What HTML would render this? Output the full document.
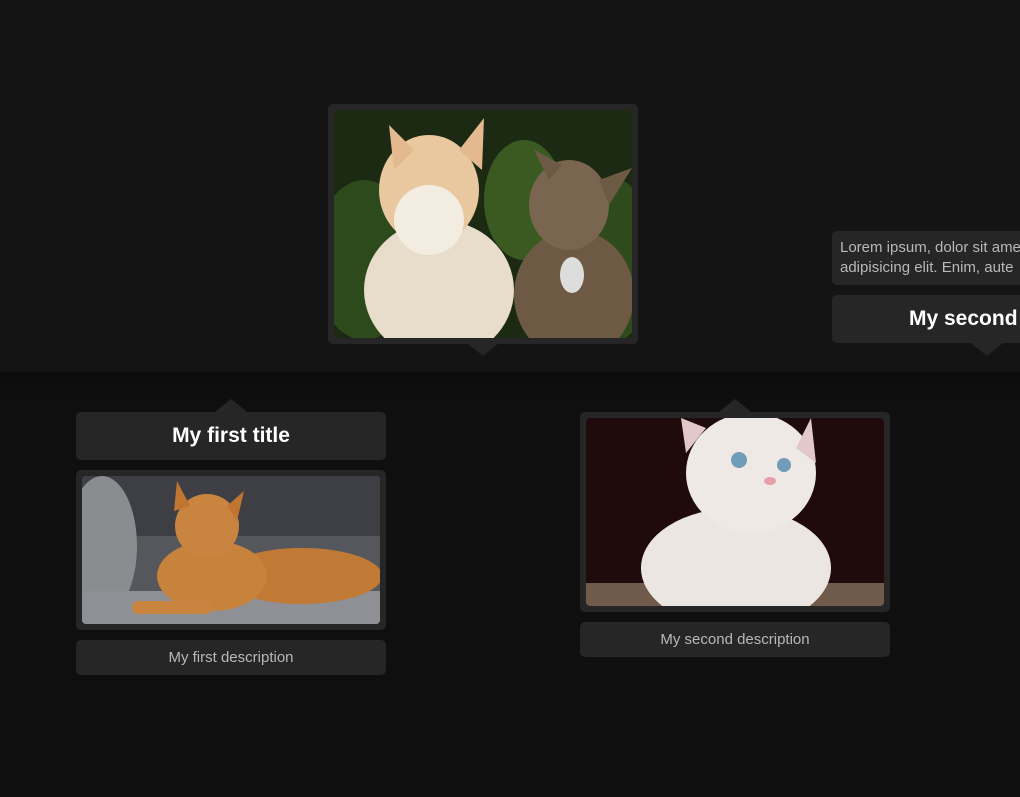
<!DOCTYPE html>
<html><head><meta charset="utf-8"><style>
*{margin:0;padding:0;box-sizing:border-box}
body{width:1020px;height:797px;overflow:hidden;background:#0f0f0f;font-family:"Liberation Sans",sans-serif;position:relative}
.band{position:absolute;left:0;top:0;width:1020px;height:372px;background:#141414}
.shade{position:absolute;left:0;top:372px;width:1020px;height:30px;background:linear-gradient(#0b0b0b,#0f0f0f)}
.box{position:absolute;background:#262626;border-radius:5px}
.img{position:absolute;border-radius:4px;overflow:hidden}
.arr{position:absolute;width:0;height:0;border-left:16px solid transparent;border-right:16px solid transparent}
.up{border-bottom:13px solid #262626}
.dn{border-top:13px solid #262626}
.t{font-weight:bold;color:#fff;font-size:21px;text-align:center;line-height:48px;white-space:nowrap;overflow:hidden}
.d{color:#b8b8b8;font-size:15px;text-align:center;line-height:35px}
</style></head><body>
<div class="band"></div><div class="shade"></div>

<!-- top card -->
<div class="box" style="left:328px;top:104px;width:310px;height:240px"></div>
<div class="arr dn" style="left:467px;top:343px"></div>
<div class="img" style="left:334px;top:110px;width:298px;height:228px">
<svg width="298" height="228"><rect width="298" height="228" fill="#1c2a14"/>
<ellipse cx="30" cy="150" rx="50" ry="80" fill="#2d4a1d"/><ellipse cx="190" cy="90" rx="40" ry="60" fill="#3a5a22"/><ellipse cx="285" cy="150" rx="30" ry="80" fill="#2f4a1c"/>
<ellipse cx="105" cy="180" rx="75" ry="70" fill="#e8dccb"/><ellipse cx="95" cy="80" rx="50" ry="55" fill="#e9c8a0"/>
<polygon points="55,15 80,40 60,60" fill="#e4b98f"/><polygon points="150,8 125,40 148,60" fill="#e4b98f"/>
<ellipse cx="95" cy="110" rx="35" ry="35" fill="#f3ece0"/>
<ellipse cx="240" cy="185" rx="60" ry="65" fill="#6e5a44"/><ellipse cx="235" cy="95" rx="40" ry="45" fill="#7a6650"/>
<polygon points="200,40 215,70 228,55" fill="#6d5a45"/><polygon points="298,58 265,70 275,95" fill="#6d5a45"/>
<ellipse cx="238" cy="165" rx="12" ry="18" fill="#ddd"/>
</svg></div>

<!-- far right -->
<div class="box" style="left:832px;top:231px;width:200px;height:54px;color:#b8b8b8;font-size:15px;line-height:20px;padding:7px 8px;white-space:nowrap;overflow:hidden">Lorem ipsum, dolor sit amet<br>adipisicing elit. Enim, aute</div>
<div class="box t" style="left:832px;top:295px;width:200px;height:48px;padding-left:77px;text-align:left">My second title</div>
<div class="arr dn" style="left:971px;top:343px"></div>

<!-- left -->
<div class="arr up" style="left:215px;top:399px"></div>
<div class="box t" style="left:76px;top:412px;width:310px;height:48px">My first title</div>
<div class="box" style="left:76px;top:470px;width:310px;height:160px"></div>
<div class="img" style="left:82px;top:476px;width:298px;height:148px">
<svg width="298" height="148"><rect width="298" height="148" fill="#55575c"/>
<rect x="0" y="0" width="298" height="60" fill="#3e3f44"/><ellipse cx="20" cy="70" rx="35" ry="70" fill="#8a8c90"/>
<rect x="0" y="115" width="298" height="33" fill="#8e9096"/>
<ellipse cx="220" cy="100" rx="80" ry="28" fill="#c17a35"/><ellipse cx="130" cy="100" rx="55" ry="35" fill="#c7823c"/>
<ellipse cx="125" cy="50" rx="32" ry="32" fill="#c98540"/>
<polygon points="95,5 108,30 92,35" fill="#c07530"/><polygon points="162,15 145,30 155,45" fill="#c07530"/>
<rect x="50" y="125" width="80" height="13" rx="6" fill="#c98540"/>
</svg></div>
<div class="box d" style="left:76px;top:640px;width:310px;height:35px">My first description</div>

<!-- right -->
<div class="arr up" style="left:719px;top:399px"></div>
<div class="box" style="left:580px;top:412px;width:310px;height:200px"></div>
<div class="img" style="left:586px;top:418px;width:298px;height:188px">
<svg width="298" height="188"><rect width="298" height="188" fill="#1f0a0c"/>
<rect x="0" y="165" width="298" height="23" fill="#6f5a4c"/>
<ellipse cx="150" cy="150" rx="95" ry="60" fill="#ece6e2"/><ellipse cx="165" cy="55" rx="65" ry="60" fill="#efe9e6"/>
<polygon points="95,0 100,35 120,10" fill="#e2c8c8"/><polygon points="225,0 210,30 230,45" fill="#e2c8c8"/>
<circle cx="153" cy="42" r="8" fill="#6f9cb8"/><circle cx="198" cy="47" r="7" fill="#6f9cb8"/>
<ellipse cx="184" cy="63" rx="6" ry="4" fill="#e8a0a8"/>
</svg></div>
<div class="box d" style="left:580px;top:622px;width:310px;height:35px">My second description</div>
</body></html>
